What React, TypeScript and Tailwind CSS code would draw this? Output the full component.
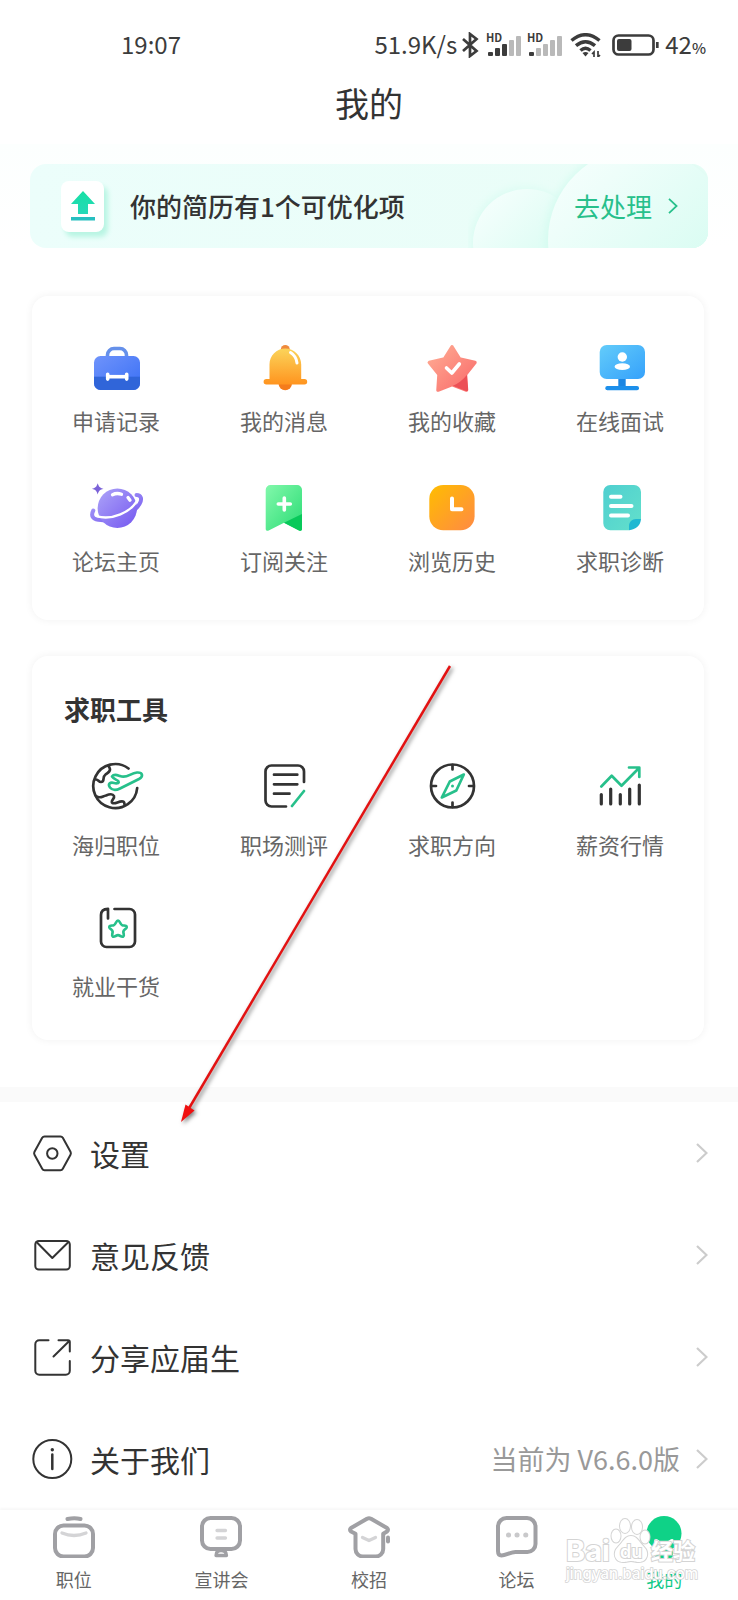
import type { ReactNode } from "react";
import clsx from "clsx";

type Entry = { label: string; icon: ReactNode };

const Icon = ({ children }: { children: ReactNode }) => (
    <svg viewBox="0 0 52 48" className="w-[52px] h-12 overflow-visible" fill="none" aria-hidden="true">
        {children}
    </svg>
);

const LineIcon = ({ children }: { children: ReactNode }) => (
    <svg viewBox="0 0 52 48" className="w-[52px] h-12 overflow-visible" fill="none" stroke="#333" strokeWidth="2.7" strokeLinecap="round" strokeLinejoin="round" aria-hidden="true">
        {children}
    </svg>
);

const Gradient = ({ id, from, to, down }: { id: string; from: string; to: string; down?: boolean }) => (
    <linearGradient id={id} x1="0" y1="0" x2={down ? "0" : "1"} y2="1">
        <stop offset="0" stopColor={from} />
        <stop offset="1" stopColor={to} />
    </linearGradient>
);

const services: Entry[] = [
    {
        label: "申请记录",
        icon: (
            <Icon>
                <defs>
                    <Gradient id="case" from="#6f93fb" to="#3a70f5" />
                    <clipPath id="caseBody"><rect x="4" y="12" width="46" height="34" rx="6.5" /></clipPath>
                </defs>
                <path d="M17.5 13v-2a6.5 6.5 0 0 1 6.500-6.500h6a6.500 6.500 0 0 1 6.500 6.500v2" stroke="#6590ea" strokeWidth="3.600" />
                <rect x="4" y="12" width="46" height="34" rx="6.5" fill="url(#case)" />
                <rect x="4" y="32.700" width="46" height="14" fill="#3065d9" clipPath="url(#caseBody)" />
                <path d="M18 32.700h18.500" stroke="#fff" strokeWidth="3.600" />
                <path d="M17.700 30.300v4.800M36.700 30.300v4.800" stroke="#fff" strokeWidth="3.600" strokeLinecap="round" />
            </Icon>
        ),
    },
    {
        label: "我的消息",
        icon: (
            <Icon>
                <defs><Gradient id="bell" from="#fbd45a" to="#ff941f" down /></defs>
                <circle cx="27.300" cy="5.500" r="4.500" fill="#ef8a3c" />
                <path d="M20.500 39.500h13.500a6.700 6.700 0 0 1-13.500 0Z" fill="#f57c1c" />
                <path d="M11.500 35V20.500C11.500 11.500 18.500 4.500 27.300 4.500S43.200 11.500 43.200 20.500V35h3.300a2.700 2.700 0 0 1 0 5.400H8.300a2.700 2.700 0 0 1 0-5.400Z" fill="url(#bell)" />
                <path d="M32.500 8.500C36.500 11 38.500 14.500 39 19" stroke="#fff" strokeWidth="3" strokeLinecap="round" />
            </Icon>
        ),
    },
    {
        label: "我的收藏",
        icon: (
            <Icon>
                <defs>
                    <Gradient id="star" from="#ffad94" to="#f96a6a" />
                    <clipPath id="starBody"><path d="M26 .5 34.500 14.500 51 17.700 40.800 30 42.500 48 26 41.500 10 48 11.300 30 1 17.700 17.500 14.500Z" /></clipPath>
                </defs>
                <path d="M26 2.800 33.500 15 49 18.500 39.500 30.500 40.500 46 26 40.500 12 46 13 30.500 3.300 18.500 18.500 15Z" fill="url(#star)" stroke="url(#star)" strokeWidth="3.500" strokeLinejoin="round" />
                <path d="M41.300 30.500C37 36 32 39.500 26.500 42l14.300 5.500 1.300-1.500Z" fill="#ec5056" clipPath="url(#starBody)" />
                <path d="m20.500 24 5.300 5 7.500-9" stroke="#fff" strokeWidth="3.600" strokeLinecap="round" strokeLinejoin="round" />
            </Icon>
        ),
    },
    {
        label: "在线面试",
        icon: (
            <Icon>
                <defs><Gradient id="screen" from="#63ccfa" to="#35a1fb" /></defs>
                <path d="M24.300 34h7.400v9h-7.400z" fill="#1c86e2" />
                <rect x="11.300" y="42" width="33.700" height="4.300" rx="2" fill="#1c8feb" />
                <rect x="5.700" y="1" width="45.300" height="34" rx="7" fill="url(#screen)" />
                <circle cx="28.300" cy="13" r="4.700" fill="#fff" />
                <ellipse cx="28.300" cy="22.700" rx="7.700" ry="3.400" fill="#fff" />
            </Icon>
        ),
    },
    {
        label: "论坛主页",
        icon: (
            <Icon>
                <defs><Gradient id="planet" from="#ada4f8" to="#7457f0" /></defs>
                <path d="M3.300 26.500C0 33 4 36 11 36 28 37.500 44 29 49.500 20 52.500 15 51 11 46.500 11" stroke="url(#planet)" strokeWidth="4" strokeLinecap="round" />
                <circle cx="27.300" cy="24.300" r="19.700" fill="url(#planet)" />
                <path d="M6.500 32C21 37 42 28 47.500 15.500" stroke="#fff" strokeWidth="2.300" strokeLinecap="round" />
                <path d="M22.500 10.700c3-1.500 6-1.500 9-.5M38 13.500l2 2.700" stroke="#fff" strokeWidth="3.300" strokeLinecap="round" />
                <path d="M7.700-.8C9 3 9.700 3.600 13.500 4.800 9.700 6 9 6.600 7.700 10.400 6.400 6.600 5.700 6 1.900 4.800 5.700 3.600 6.400 3 7.700-.8Z" fill="#7b62d8" />
            </Icon>
        ),
    },
    {
        label: "订阅关注",
        icon: (
            <Icon>
                <defs><Gradient id="mark" from="#82f8ab" to="#2bdc75" /></defs>
                <path d="M12.500 1h26.700A4.800 4.800 0 0 1 44 5.800V45c0 1.700-1.500 2.300-3 1.500L26 38.700 10.700 46.500c-1.500.8-3 .2-3-1.500V5.800A4.800 4.800 0 0 1 12.500 1Z" fill="url(#mark)" />
                <path d="M44 30 26 38.700 41 46.500c1.500.8 3 .2 3-1.500Z" fill="#08c95a" />
                <path d="M26.300 14v12M20.300 20h12" stroke="#fff" strokeWidth="3.600" strokeLinecap="round" />
            </Icon>
        ),
    },
    {
        label: "浏览历史",
        icon: (
            <Icon>
                <defs><Gradient id="clock" from="#ffbd00" to="#ff8a44" /></defs>
                <rect x="3.300" y="1" width="45.300" height="45.300" rx="14" fill="url(#clock)" />
                <path d="M26 14.500v10.800h9.500" stroke="#fff" strokeWidth="4" strokeLinecap="round" strokeLinejoin="round" />
            </Icon>
        ),
    },
    {
        label: "求职诊断",
        icon: (
            <Icon>
                <defs><Gradient id="sheet" from="#4fcfd0" to="#63e0cb" /></defs>
                <g transform="translate(1 0)">
                    <path d="M15.300 1H39a7 7 0 0 1 7 7v27L34 46.300H15.300a7 7 0 0 1-7-7V8a7 7 0 0 1 7-7Z" fill="url(#sheet)" />
                    <path d="M46 35h-5c-4 0-7 3-7 7v4.300C41 45.500 45.500 41.500 46 35Z" fill="#1fb8d2" />
                    <path d="M16 12.700h9.500M16 22h20.500M16 31.500h17" stroke="#fff" strokeWidth="4" strokeLinecap="round" />
                </g>
            </Icon>
        ),
    },
];

const tools: Entry[] = [
    {
        label: "海归职位",
        icon: (
            <LineIcon>
                <path d="M38.500 6.500A22 22 0 1 0 47.200 26" />
                <path d="M6 17.500c2.500 0 2.500 2.500 5 2.500 4.500 0 .5-4.500 4.500-7.500 2-1.500 4.500-2.500 4.500-5 0-1.500-1-2.500-1.500-4M6 34c4 3 6 .5 10-.5 3.500-1.500 7-1.500 8 .5 1 2.500-4 5.500-1.500 7 3 1.500 6.500-2.500 10.500-1.500 1.500.5 1.500 2 1.500 3" />
                <path d="M22 14.500c2-3 5-1.500 8-.5 7 3 10-3 17-3.500 6-.3 6.500 4 2 6.500L30 26.500c-4 2-8 1.500-10-1-2.500-3.500 0-5.500 4-4.500 2 .5 5.500.5 4.500-1.500-1-1.800-4-1.500-6.500-5Z" stroke="#27c08b" />
            </LineIcon>
        ),
    },
    {
        label: "职场测评",
        icon: (
            <LineIcon>
                <path d="M46 20V9.500a6 6 0 0 0-6-6H13.500a6 6 0 0 0-6 6v29a6 6 0 0 0 6 6H28" />
                <path d="M16 12.700h23.300M16 22.300h23.300M16 31.700h15.500" />
                <path d="M46 29 34 44" stroke="#27c08b" />
            </LineIcon>
        ),
    },
    {
        label: "求职方向",
        icon: (
            <LineIcon>
                <circle cx="26.500" cy="24" r="21.500" />
                <path d="M26.500 3v4.500M26.500 40.500V45M5.500 24H10M43 24h4.500" />
                <path d="M37.800 12.500 23.800 19.500 15.800 35.500 30.300 28.500Z" stroke="#27c08b" />
                <circle cx="26.500" cy="24" r="1.500" fill="#27c08b" stroke="none" />
            </LineIcon>
        ),
    },
    {
        label: "薪资行情",
        icon: (
            <LineIcon>
                <path d="M7.300 32.500v9.500M16.700 27v15M26.300 32.500v9.500M35.700 27v15M45.300 23v19" strokeWidth="3.200" />
                <path d="M7.300 24.500 17.700 13.700 27.500 23.700 45 6M35 5.500h10.300V15" stroke="#27c08b" />
            </LineIcon>
        ),
    },
    {
        label: "就业干货",
        icon: (
            <LineIcon>
                <path d="M18 15.500V5.800c-4.500.2-7 2.200-7 6.200v26.500a5.500 5.500 0 0 0 5.500 5.500h23a5.500 5.500 0 0 0 5.500-5.500v-27A5.500 5.500 0 0 0 39.500 6H24.500" />
                <path d="M28 17.500c2 0 2.200 4.200 4.200 4.700 2 .6 4.800 0 4.500 2-.4 1.800-3 2.500-3.300 4.300-.3 2 1.500 4-.2 5-1.600 1-3.200-1.300-5.200-1.300s-3.600 2.300-5.200 1.300c-1.700-1 .1-3-.2-5-.3-1.800-2.900-2.500-3.300-4.300-.3-2 2.500-1.400 4.500-2 2-.5 2.200-4.700 4.200-4.700Z" stroke="#27c08b" />
            </LineIcon>
        ),
    },
];

const menu: (Entry & { note?: string })[] = [
    {
        label: "设置",
        icon: (
            <>
                <path d="M12.500 3.500h16q1.500 0 2.300 1.300l7.700 14q.8 1.500 0 3l-7.700 14q-.8 1.400-2.300 1.400h-16q-1.500 0-2.300-1.400l-7.700-14q-.8-1.500 0-3l7.700-14q.8-1.300 2.300-1.300Z" />
                <circle cx="20.300" cy="20.500" r="5.200" />
            </>
        ),
    },
    {
        label: "意见反馈",
        icon: (
            <>
                <rect x="3.300" y="6" width="34.500" height="28.500" rx="3.500" />
                <path d="M4.500 7 20.300 23 36.500 7" />
            </>
        ),
    },
    {
        label: "分享应届生",
        icon: (
            <>
                <path d="M16.500 3.300H7.300a4 4 0 0 0-4 4v26.500a4 4 0 0 0 4 4h26.500a4 4 0 0 0 4-4V24" />
                <path d="M26.500 3.300H36q1.800 0 1.800 1.800V14.500M37 4.300 21.500 19.500" />
            </>
        ),
    },
    {
        label: "关于我们",
        note: "当前为 V6.6.0版",
        icon: (
            <>
                <circle cx="20.300" cy="20" r="19" />
                <path d="M20.300 15.500v14.500" strokeWidth="2.500" />
                <circle cx="20.300" cy="10.700" r="1.700" fill="#333" stroke="none" />
            </>
        ),
    },
];

const tabs: Entry[] = [
    {
        label: "职位",
        icon: (
            <>
                <rect x="2" y="9.500" width="38" height="31" rx="8.500" />
                <path d="M14.500 3q7-1.500 13 0" />
                <path d="M9 17q12 5 24 0" stroke="#d4d4d6" strokeWidth="3.300" />
            </>
        ),
    },
    {
        label: "宣讲会",
        icon: (
            <>
                <rect x="2" y="2" width="38" height="31" rx="8.500" />
                <path d="M16 39.500c0-3 1-5 5-5s5.500 2 5.500 5Z" strokeWidth="3.300" />
                <path d="M17 14.500h8.500M17 22h8.500" stroke="#d4d4d6" strokeWidth="3.300" />
            </>
        ),
    },
    {
        label: "校招",
        icon: (
            <>
                <path d="M19 2.700q2-1 4 0L39 12q2 1.700 0 3.500l-3.800 2.300V33a7.500 7.500 0 0 1-7.500 7.500H15A7.500 7.500 0 0 1 7.500 33V17.800L3 15.500Q1 13.700 3 12Z" />
                <path d="M40 21.500v4" />
                <path d="m14.500 21.500 6.500 3 6.500-3" stroke="#d4d4d6" strokeWidth="3.300" />
            </>
        ),
    },
    {
        label: "论坛",
        icon: (
            <>
                <path d="M10.500 2H31a8.500 8.500 0 0 1 8.500 8.500V28a8 8 0 0 1-8 8H19.500C14 36 10 39.500 5.500 39.500 3 39.500 2 38 2 35V10.500A8.500 8.500 0 0 1 10.500 2Z" />
                <path d="M12.500 19h.1M21 19h.1M29.700 19h.1" stroke="#c9c9cb" strokeWidth="5" />
            </>
        ),
    },
    {
        label: "我的",
        icon: (
            <>
                <circle cx="21" cy="17.500" r="17.500" fill="#0fd287" stroke="none" />
                <path d="M12 31h18v8q0 3-3 3H15q-3 0-3-3Z" fill="#0fd287" stroke="none" />
                <path d="m13 25 8 5 8-5" stroke="#fff" />
            </>
        ),
    },
];

const Chevron = ({ className }: { className: string }) => (
    <svg viewBox="0 0 12 20" className={className} fill="none" stroke="currentColor" strokeWidth="2.200" aria-hidden="true">
        <path d="m1 1 9.500 9L1 19" />
    </svg>
);

function Signal({ active }: { active: number }) {
    return (
        <svg viewBox="0 0 35 24" className="w-[35px] h-6 overflow-visible" aria-hidden="true">
            {[0, 1, 2, 3, 4].map(i => (
                <rect key={i} x={2 + i * 7} y={19 - i * 4} width="5" height={4 + i * 4} rx="1" fill={i < active ? "#3c3c3c" : "#b9b9b9"} />
            ))}
            <rect x="0" y="0" width="17" height="11" fill="#fff" />
            <text x="0" y="9" fontSize="11" fontWeight="700" fill="#3c3c3c">HD</text>
        </svg>
    );
}

function StatusBar() {
    return (
        <div className="flex items-center h-7 mt-[31px] pl-[121px] pr-8 text-[24px] leading-7 text-[#3c3c3c]">
            <span className="-mt-0.5">19:07</span>
            <span className="-mt-0.5 ml-auto">51.9K/s</span>
            <svg viewBox="0 0 18 26" className="w-[18px] h-[26px] ml-1" fill="none" stroke="#3c3c3c" strokeWidth="2.700" aria-hidden="true">
                <path d="m2 7 13.500 12L9 24V2l6.500 5L2 19" />
            </svg>
            <div className="flex ml-[7px] gap-[6px]">
                <Signal active={3} />
                <Signal active={1} />
            </div>
            <svg viewBox="0 0 32 24" className="w-8 h-6 ml-[8px]" fill="none" stroke="#3c3c3c" strokeWidth="3.500" aria-hidden="true">
                <path d="M1.500 7.500Q15.500-4 29.500 7.500M6 12.700q9.500-8 19 0M10.500 17.500q5-4.500 10 0" />
                <path d="m12.500 20 3 3.500 3-3.500q-3-2-6 0Z" fill="#3c3c3c" stroke="none" />
                <path d="M24 24v-5l-2 2M28 18v6l2-2" strokeWidth="1.700" />
            </svg>
            <svg viewBox="0 0 47 22" className="w-[47px] h-[22px] ml-2.5" fill="none" stroke="#3c3c3c" strokeWidth="2.700" aria-hidden="true">
                <rect x="1.500" y="1.500" width="40" height="19" rx="5" />
                <rect x="5" y="5" width="14.500" height="12" rx="2" fill="#3c3c3c" stroke="none" />
                <path d="M45.300 8v6" />
            </svg>
            <span className="-mt-0.5 ml-1.5">42<span className="text-[15px] leading-none font-medium">%</span></span>
        </div>
    );
}

function ResumeBanner() {
    return (
        <a href="#resume" className="relative flex items-center h-[84px] mx-[30px] pl-[31px] pr-[30px] rounded-2xl overflow-hidden bg-linear-to-r from-[#ecfefb] to-[#e9fdf7]">
            <svg viewBox="0 0 240 84" className="absolute right-0 top-0 w-60 h-[84px]" aria-hidden="true">
                <defs>
                    <linearGradient id="orb" x1="0" y1="0" x2="1" y2="1">
                        <stop offset="0" stopColor="#f9fffe" />
                        <stop offset="1" stopColor="#cefbee" />
                    </linearGradient>
                    <filter id="glow" x="-20%" y="-20%" width="140%" height="140%">
                        <feGaussianBlur stdDeviation="5" />
                    </filter>
                </defs>
                <circle cx="57" cy="78" r="54" fill="#d9fcf2" filter="url(#glow)" />
                <circle cx="59" cy="79" r="54" fill="url(#orb)" />
                <circle cx="170" cy="76" r="92" fill="#d3fbef" filter="url(#glow)" />
                <circle cx="172" cy="76" r="92" fill="url(#orb)" />
            </svg>
            <span className="flex items-center justify-center w-[43px] h-[51px] rounded-lg bg-white shadow-[4px_5px_5px_#b9f5e3]">
                <svg viewBox="0 0 24 30" className="w-6 h-[30px]" aria-hidden="true">
                    <defs><Gradient id="upload" from="#17e0a4" to="#25d8b8" down /></defs>
                    <path d="M12 0 24 13h-7v10H7V13H0Z" fill="url(#upload)" />
                    <path d="M0 26h24v3.500H0z" fill="#27bfc0" />
                </svg>
            </span>
            <span className="ml-[26px] text-[26px] leading-9 font-medium text-[#333]">你的简历有1个可优化项</span>
            <span className="relative ml-auto text-[26px] leading-9 text-[#27c08b]">去处理</span>
            <Chevron className="relative w-2.5 h-4 ml-4 text-[#27c08b]" />
        </a>
    );
}

export default function App() {
    return (
        <div className="relative flex flex-col min-h-screen overflow-hidden bg-white font-['Noto_Sans_CJK_SC',sans-serif] text-[#333]">
            <header>
                <StatusBar />
                <h1 className="pt-[22px] pb-[19px] text-center text-[34px] leading-[44px]">我的</h1>
            </header>

            <main className="flex-1">
                <div className="pt-5 bg-linear-to-b from-[#fcfffe] to-white">
                    <ResumeBanner />
                </div>

                {/* Services */}
                <section className="grid grid-cols-4 gap-y-[50px] ml-8 mr-[34px] mt-12 pt-12 pb-[46px] rounded-2xl bg-white shadow-[0_0_8px_rgba(0,0,0,0.06)]">
                    {services.map(item => (
                        <a key={item.label} href="#service" className="flex flex-col items-center">
                            {item.icon}
                            <span className="mt-[14px] text-[22px] leading-7 text-[#666]">{item.label}</span>
                        </a>
                    ))}
                </section>

                {/* Job hunting tools */}
                <section className="ml-8 mr-[34px] mt-9 pt-[35px] pb-[41px] rounded-2xl bg-white shadow-[0_0_8px_rgba(0,0,0,0.06)]">
                    <h2 className="pl-8 text-[26px] leading-9 font-bold">求职工具</h2>
                    <div className="grid grid-cols-4 gap-y-[45px] mt-[35px]">
                        {tools.map(item => (
                            <a key={item.label} href="#tool" className="flex flex-col items-center">
                                {item.icon}
                                <span className="mt-5 text-[22px] leading-7 text-[#666]">{item.label}</span>
                            </a>
                        ))}
                    </div>
                </section>

                <div className="h-[15px] mt-[47px] bg-[#fafafa]" />

                <ul>
                    {menu.map(item => (
                        <li key={item.label}>
                            <a href="#menu" className="flex items-center h-[102px] pl-8 pr-[30px]">
                                <svg viewBox="0 0 40 40" className="w-10 h-10 overflow-visible" fill="none" stroke="#333" strokeWidth="2" strokeLinecap="round" strokeLinejoin="round" aria-hidden="true">
                                    {item.icon}
                                </svg>
                                <span className="ml-[18px] text-[30px] leading-10">{item.label}</span>
                                <span className="ml-auto text-[27px] leading-10 text-[#999]">{item.note}</span>
                                <Chevron className="w-3 h-5 ml-4 text-[#ccc]" />
                            </a>
                        </li>
                    ))}
                </ul>
            </main>

            <nav className="grid grid-cols-5 pt-[6px] pb-[9px] bg-white shadow-[0_-2px_2px_rgba(0,0,0,0.03)]">
                {tabs.map(tab => (
                    <a key={tab.label} href="#tab" className="flex flex-col items-center">
                        <svg viewBox="0 0 42 42" className="w-[42px] h-[42px]" fill="none" stroke="#a0a0a4" strokeWidth="4" strokeLinecap="round" strokeLinejoin="round" aria-hidden="true">
                            {tab.icon}
                        </svg>
                        <span className={clsx("mt-[9px] text-[18px] leading-6", tab.label === "我的" ? "text-[#0fc987]" : "text-[#666]")}>
                            {tab.label}
                        </span>
                    </a>
                ))}
            </nav>

            {/* Pointer to the settings row */}
            <svg viewBox="0 0 290 480" className="absolute left-[170px] top-[660px] w-[290px] h-[480px] pointer-events-none drop-shadow-[2px_2px_2px_rgba(0,0,0,0.5)]" aria-hidden="true">
                <path d="M280 6 18 450" stroke="#e31212" strokeWidth="2.500" />
                <path d="M11 462 15.500 444.500 24.500 450.500Z" fill="#f01010" />
            </svg>

            {/* Watermark */}
            <svg viewBox="0 0 136 68" className="absolute right-[38px] bottom-[14px] w-[136px] h-[68px] pointer-events-none overflow-visible" fill="#fff" stroke="#d4d4d4" strokeWidth="2" paintOrder="stroke" fontFamily="Inter, 'Noto Sans CJK SC', sans-serif" aria-hidden="true">
                <text x="2" y="43" fontSize="29" fontWeight="700">Bai</text>
                <ellipse cx="52" cy="18" rx="4.500" ry="6.500" />
                <ellipse cx="61" cy="8" rx="5" ry="7" />
                <ellipse cx="73" cy="9" rx="5" ry="7" />
                <ellipse cx="81" cy="19" rx="4.500" ry="6.500" />
                <path d="M67 18c6 0 8 6 13 11 6 6 3 15-5 15-4 0-5-1-8-1s-4 1-8 1c-8 0-11-9-5-15 5-5 7-11 13-11Z" />
                <text x="56" y="40" fontSize="18" fontWeight="600">du</text>
                <text x="87" y="41" fontSize="22" fontWeight="700">经验</text>
                <text x="2" y="61" fontSize="15" fontWeight="500" strokeWidth="1.500">jingyan.baidu.com</text>
            </svg>
        </div>
    );
}
